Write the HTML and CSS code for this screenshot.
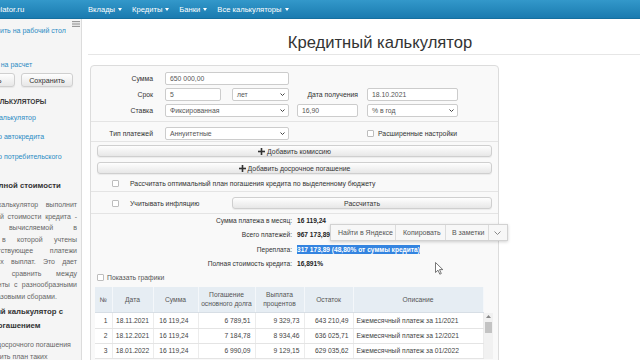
FILE: index.html
```html
<!DOCTYPE html>
<html lang="ru">
<head>
  <meta charset="UTF-8">
  <meta name="viewport" content="width=device-width, initial-scale=1.0">
  <title>Кредитный калькулятор</title>
  <link rel="stylesheet" href="styles.css">
</head>
<body>
<div class="site">
  <!-- Top navigation -->
  <div class="navbar">
    <a class="brand">fincalculator.ru</a>
    <ul class="menu">
      <li>Вклады <span class="caret"></span></li>
      <li>Кредиты <span class="caret"></span></li>
      <li>Банки <span class="caret"></span></li>
      <li>Все калькуляторы <span class="caret"></span></li>
    </ul>
  </div>

  <div class="layout">
    <!-- Sidebar -->
    <aside class="sidebar">
      <div class="side-top">
        <a class="side-link icon-link">Установить на рабочий стол</a>
        <svg class="menu-icon" width="8" height="6" viewBox="0 0 8 6">
          <rect x="0" y="0" width="8" height="1.2" fill="#999"/>
          <rect x="0" y="2.4" width="8" height="1.2" fill="#999"/>
          <rect x="0" y="4.8" width="8" height="1.2" fill="#999"/>
        </svg>
      </div>
      <a class="side-link icon-link save-link">Ссылка на расчет</a>
      <div class="side-btns">
        <button class="btn side-btn load">Загрузить</button>
        <button class="btn side-btn save">Сохранить</button>
      </div>
      <div class="side-title">ПОХОЖИЕ КАЛЬКУЛЯТОРЫ</div>
      <a class="side-link item first">Ипотечный калькулятор</a>
      <a class="side-link item">Калькулятор автокредита</a>
      <a class="side-link item">Калькулятор потребительского кредита</a>

      <div class="side-h">Расчет полной стоимости</div>
      <p class="side-p">
        <span class="jl">Кредитный калькулятор выполнит</span>
        <span class="jl">расчет полной стоимости кредита -</span>
        <span class="jl">величины, вычисляемой в</span>
        <span class="jl">процентах, в которой учтены</span>
        <span class="jl">все сопутствующее платежи</span>
        <span class="jl">и график их выплат. Это дает</span>
        <span class="jl">возможность сравнить между</span>
        <span class="jl">собой варианты с разнообразными</span>
        <span class="last">ставками и разовыми сборами.</span>
      </p>
      <div class="side-h2"><span class="h2a">Кредитный калькулятор с</span><span class="h2b">досрочным погашением</span></div>
      <p class="side-p p2">
        <span class="jl">Для расчета досрочного погашения</span>
        <span class="jl">можно составить план таких</span>
        <span class="jl">платежей. Многие банки часто</span>
      </p>
    </aside>

    <!-- Main content -->
    <main class="main">
      <h1 class="title">Кредитный калькулятор</h1>

      <div class="panel">
        <div class="form-grid">
          <div class="lbl">Сумма</div>
          <div class="field">650 000,00</div>
          <div></div><div></div>

          <div class="lbl">Срок</div>
          <div class="pair">
            <div class="field short">5</div>
            <div class="field select">лет <svg class="chev" width="5" height="3" viewBox="0 0 5 3"><polyline points="0.5,0.5 2.5,2.5 4.5,0.5" fill="none" stroke="#444" stroke-width="1"/></svg></div>
          </div>
          <div class="lbl lbl-mid">Дата получения</div>
          <div class="field">18.10.2021</div>

          <div class="lbl">Ставка</div>
          <div class="field select">Фиксированная <svg class="chev" width="5" height="3" viewBox="0 0 5 3"><polyline points="0.5,0.5 2.5,2.5 4.5,0.5" fill="none" stroke="#444" stroke-width="1"/></svg></div>
          <div class="field f-mid">16,90</div>
          <div class="field select">% в год <svg class="chev" width="5" height="3" viewBox="0 0 5 3"><polyline points="0.5,0.5 2.5,2.5 4.5,0.5" fill="none" stroke="#444" stroke-width="1"/></svg></div>
        </div>

        <div class="sep"></div>

        <div class="form-grid row4">
          <div class="lbl">Тип платежей</div>
          <div class="field select">Аннуитетные <svg class="chev" width="5" height="3" viewBox="0 0 5 3"><polyline points="0.5,0.5 2.5,2.5 4.5,0.5" fill="none" stroke="#444" stroke-width="1"/></svg></div>
          <div></div>
          <div class="adv"><span class="cb"></span>Расширенные настройки</div>
        </div>

        <div class="sep"></div>

        <button class="btn wide first-wide"><svg width="7" height="7" viewBox="0 0 7 7"><rect x="2.7" y="0" width="1.6" height="7" fill="#333"/><rect x="0" y="2.7" width="7" height="1.6" fill="#333"/></svg> Добавить комиссию</button>
        <button class="btn wide"><svg width="7" height="7" viewBox="0 0 7 7"><rect x="2.7" y="0" width="1.6" height="7" fill="#333"/><rect x="0" y="2.7" width="7" height="1.6" fill="#333"/></svg> Добавить досрочное погашение</button>

        <div class="check-row"><span class="cb"></span>Рассчитать оптимальный план погашения кредита по выделенному бюджету</div>

        <div class="sep sep-a"></div>

        <div class="infl">
          <span class="cb"></span>Учитывать инфляцию
          <button class="btn calc">Рассчитать</button>
        </div>

        <div class="sep sep-b"></div>

        <div class="results">
          <div class="r-lbl">Сумма платежа в месяц:</div><div class="r-val">16 119,24</div>
          <div class="r-lbl">Всего платежей:</div><div class="r-val">967 173,89</div>
          <div class="r-lbl">Переплата:</div><div class="r-val"><span class="sel">317 173,89 (48,80% от суммы кредита)</span></div>
          <div class="r-lbl">Полная стоимость кредита:</div><div class="r-val">16,891%</div>
        </div>

        <div class="graphs"><span class="cb"></span>Показать графики</div>

        <div class="tbl">
          <table class="t-head">
            <colgroup><col style="width:17px"><col style="width:41px"><col style="width:45px"><col style="width:57px"><col style="width:49px"><col style="width:49px"><col style="width:130px"></colgroup>
            <tr>
              <th>№</th><th>Дата</th><th>Сумма</th><th>Погашение основного долга</th><th>Выплата процентов</th><th>Остаток</th><th>Описание</th>
            </tr>
          </table>
          <div class="t-body">
            <table>
              <colgroup><col style="width:17px"><col style="width:41px"><col style="width:45px"><col style="width:57px"><col style="width:49px"><col style="width:49px"><col style="width:130px"></colgroup>
              <tr><td class="num">1</td><td class="c">18.11.2021</td><td class="sum">16 119,24</td><td class="num">6 789,51</td><td class="num">9 329,73</td><td class="num">643 210,49</td><td>Ежемесячный платеж за 11/2021</td></tr>
              <tr><td class="num">2</td><td class="c">18.12.2021</td><td class="sum">16 119,24</td><td class="num">7 184,78</td><td class="num">8 934,46</td><td class="num">636 025,71</td><td>Ежемесячный платеж за 12/2021</td></tr>
              <tr><td class="num">3</td><td class="c">18.01.2022</td><td class="sum">16 119,24</td><td class="num">6 990,09</td><td class="num">9 129,15</td><td class="num">629 035,62</td><td>Ежемесячный платеж за 01/2022</td></tr>
            </table>
            <div class="scroll">
              <svg class="s-up" width="5" height="3" viewBox="0 0 5 3"><polygon points="0,3 2.5,0 5,3" fill="#888"/></svg>
              <div class="thumb"></div>
            </div>
          </div>
        </div>
      </div>

      <!-- Browser selection popup -->
      <div class="popup">
        <span class="pi p1">Найти в Яндексе</span>
        <span class="pi p2">Копировать</span>
        <span class="pi p3">В заметки</span>
        <span class="pi p4"><svg width="7" height="4" viewBox="0 0 7 4"><polyline points="0.5,0.5 3.5,3.5 6.5,0.5" fill="none" stroke="#888" stroke-width="1"/></svg></span>
      </div>

      <svg class="cursor" width="9" height="13" viewBox="0 0 9 13">
        <path d="M0.5 0.5 L0.5 10.5 L3 8.2 L4.8 12.2 L6.3 11.5 L4.5 7.6 L7.8 7.6 Z" fill="#fff" stroke="#555" stroke-width="0.8"/>
      </svg>
    </main>
  </div>
</div>
</body>
</html>
```

FILE: styles.css
```css
* {
    box-sizing: border-box;
}
html, body {
    margin: 0;
    overflow: hidden;
}
body {
    width: 640px;
    height: 360px;
    font-family: "Liberation Sans", Arial, sans-serif;
    color: #333;
    background: #fff;
}
.site {
    margin-left: -54px;
    width: 744px;
}

/* navbar */
.navbar {
    display: flex;
    align-items: center;
    height: 19px;
    background: linear-gradient(#3398ca, #1a7bb0);
    border-bottom: 1px solid #156f9f;
}
.brand {
    width: 136px;
    padding-left: 28px;
    color: #fff;
    font-size: 7.8px;
}
.menu {
    display: flex;
    gap: 10px;
    margin: 0;
    padding: 0 0 0 6px;
    list-style: none;
}
.menu li {
    display: flex;
    align-items: center;
    gap: 3px;
    color: #fff;
    font-size: 7.6px;
}
.caret {
    border-left: 2.5px solid transparent;
    border-right: 2.5px solid transparent;
    border-top: 3px solid #fff;
}

.layout {
    display: flex;
    height: 341px;
}

/* sidebar */
.sidebar {
    width: 136px;
    flex: none;
    background: #f5f5f5;
    border-right: 1px solid #dcdcdc;
    padding: 2px 4px 0 9px;
    font-size: 7px;
    line-height: 11px;
}
.side-top {
    display: flex;
    align-items: flex-start;
}
.side-link {
    display: block;
    color: #2b8bc4;
}
.icon-link {
    padding-left: 19px;
    white-space: nowrap;
}
.side-top .side-link {
    margin-top: 3.5px;
}
.menu-icon {
    margin-left: auto;
    margin-right: -3px;
}
.save-link {
    margin-top: 23px;
}
.side-btns {
    display: flex;
    gap: 6px;
    margin-top: 3.5px;
}
.btn {
    font-family: inherit;
    color: #333;
    background: linear-gradient(#fefefe, #e7e7e7);
    border: 1px solid #cfcfcf;
    border-radius: 3px;
    padding: 0;
    box-shadow: 0 1px 1px rgba(0, 0, 0, 0.06);
}
.side-btn {
    height: 14px;
    font-size: 7.2px;
}
.load {
    width: 60px;
}
.save {
    width: 52px;
}
.side-title {
    margin-top: 8.5px;
    font-size: 6.6px;
    font-weight: bold;
    white-space: nowrap;
    color: #3a3a3a;
}
.item {
    margin-top: 8.5px;
    padding-left: 6px;
}
.item.first {
    margin-top: 5px;
    padding-left: 3px;
}
.side-h {
    margin-top: 7px;
    padding-left: 6px;
    font-weight: bold;
    font-size: 7.8px;
    white-space: nowrap;
    color: #333;
}
.side-p {
    margin: 8.8px 0 0;
    line-height: 11.4px;
    color: #666;
    white-space: nowrap;
}
.jl {
    display: block;
    text-align: justify;
    text-align-last: justify;
}
.last {
    display: block;
}
.side-h2 {
    margin-top: 3px;
    font-weight: bold;
    font-size: 7.8px;
    line-height: 14px;
    white-space: nowrap;
    color: #333;
}
.h2a {
    display: block;
    padding-left: 7px;
}
.h2b {
    display: block;
    margin-left: -9px;
}
.side-p.p2 {
    margin-top: 6.3px;
}

/* main */
.main {
    position: relative;
    margin-left: 6px;
    width: 584px;
}
.title {
    margin: 0;
    padding-top: 13px;
    font-size: 16.6px;
    line-height: 22px;
    font-weight: normal;
    text-align: center;
    color: #333;
    border-bottom: 1px solid #e6e6e6;
}
.panel {
    margin: 10px 0 0 2px;
    width: 409px;
    height: 320px;
    border: 1px solid #dcdcdc;
    border-radius: 4px;
    background: #f9f9f9;
    padding-top: 6px;
    font-size: 6.85px;
}
.form-grid {
    display: grid;
    grid-template-columns: 74px 124px 78px 91px;
    grid-auto-rows: 13px;
    row-gap: 3px;
    align-items: center;
}
.lbl {
    text-align: right;
    padding-right: 12px;
    color: #333;
}
.lbl-mid {
    padding-right: 9px;
}
.field {
    height: 13px;
    line-height: 11px;
    padding: 0 4px;
    border: 1px solid #cccccc;
    border-radius: 2px;
    background: #fff;
    color: #555;
}
.select {
    display: flex;
    align-items: center;
    justify-content: space-between;
    padding-right: 3px;
}
.pair {
    display: flex;
    gap: 11px;
}
.pair .short {
    width: 56px;
}
.pair .select {
    flex: 1;
}
.f-mid {
    margin-left: 8px;
    width: 61px;
}
.sep {
    border-top: 1px solid #e4e4e4;
    margin-top: 4px;
}
.row4 {
    margin-top: 5px;
}
.row4 + .sep {
    margin-top: 1px;
}
.adv {
    display: flex;
    align-items: center;
    white-space: nowrap;
    color: #333;
}
.adv .cb {
    margin-right: 4px;
}
.cb {
    display: inline-block;
    flex: none;
    width: 7px;
    height: 7px;
    border: 1px solid #bdbdbd;
    border-radius: 1px;
    background: #fff;
}
.wide {
    display: flex;
    align-items: center;
    justify-content: center;
    gap: 2px;
    width: 395px;
    height: 12px;
    margin: 5px 0 0 6px;
    font-size: 6.9px;
}
.first-wide {
    margin-top: 3px;
}
.check-row {
    display: flex;
    align-items: center;
    height: 10px;
    margin-top: 4px;
    padding-left: 21px;
    color: #333;
}
.check-row .cb,
.infl .cb {
    margin-right: 11px;
}
.sep-a {
    margin-top: 3px;
}
.infl {
    display: flex;
    align-items: center;
    margin-top: 5px;
    padding-left: 21px;
    color: #333;
}
.calc {
    width: 260px;
    height: 12px;
    margin: 0 6px 0 auto;
    font-size: 6.9px;
}
.sep-b {
    margin-top: 3.5px;
}
.results {
    display: grid;
    grid-template-columns: 201px 1fr;
    column-gap: 5px;
    font-size: 6.6px;
    line-height: 14.5px;
}
.r-lbl {
    text-align: right;
    color: #333;
}
.r-val {
    font-weight: bold;
    color: #222;
}
.sel {
    background: #3484e0;
    color: #fff;
    padding: 1px 0;
}
.graphs {
    display: flex;
    align-items: center;
    gap: 3px;
    height: 10px;
    margin: 1px 0 0 6px;
    color: #555;
}

/* schedule table */
.tbl {
    margin: 4px 0 0 4px;
    width: 397px;
}
.tbl table {
    width: 388px;
    table-layout: fixed;
    border-collapse: collapse;
    font-size: 6.7px;
}
.t-head th {
    height: 26px;
    padding: 0 2px;
    background: #e6edf3;
    color: #555;
    font-weight: normal;
    line-height: 9px;
    border-right: 1px solid #f4f7fa;
    border-bottom: 1px solid #d7dee5;
}
.t-body {
    display: flex;
}
.t-body td {
    height: 15px;
    padding: 0 3px;
    color: #444;
    background: #fff;
    border-bottom: 1px solid #e4e4e4;
    border-right: 1px solid #ececec;
    white-space: nowrap;
    overflow: hidden;
}
.t-body .num {
    text-align: right;
    padding-right: 4px;
}
.t-body .sum {
    text-align: right;
    padding-right: 9px;
}
.t-body .c {
    text-align: center;
}
.scroll {
    display: flex;
    flex-direction: column;
    align-items: center;
    width: 9px;
    padding: 2px 1px 0;
    background: #f1f1f1;
}
.thumb {
    width: 7px;
    height: 11px;
    margin-top: 4px;
    background: #c3c3c3;
}

/* selection popup */
.popup {
    position: absolute;
    left: 242px;
    top: 205px;
    display: flex;
    height: 17px;
    background: #f7f7f7;
    border: 1px solid #d2d2d2;
    box-shadow: 0 1px 3px rgba(0, 0, 0, 0.18);
    font-size: 7px;
    color: #555;
}
.pi {
    display: flex;
    align-items: center;
    padding-left: 7px;
    border-right: 1px solid #dcdcdc;
}
.p1 {
    width: 65px;
}
.p2 {
    width: 50px;
}
.p3 {
    width: 43px;
    padding-left: 6px;
}
.p4 {
    width: 18px;
    padding-left: 5px;
    border-right: none;
}
.cursor {
    position: absolute;
    left: 347px;
    top: 243px;
}
```
